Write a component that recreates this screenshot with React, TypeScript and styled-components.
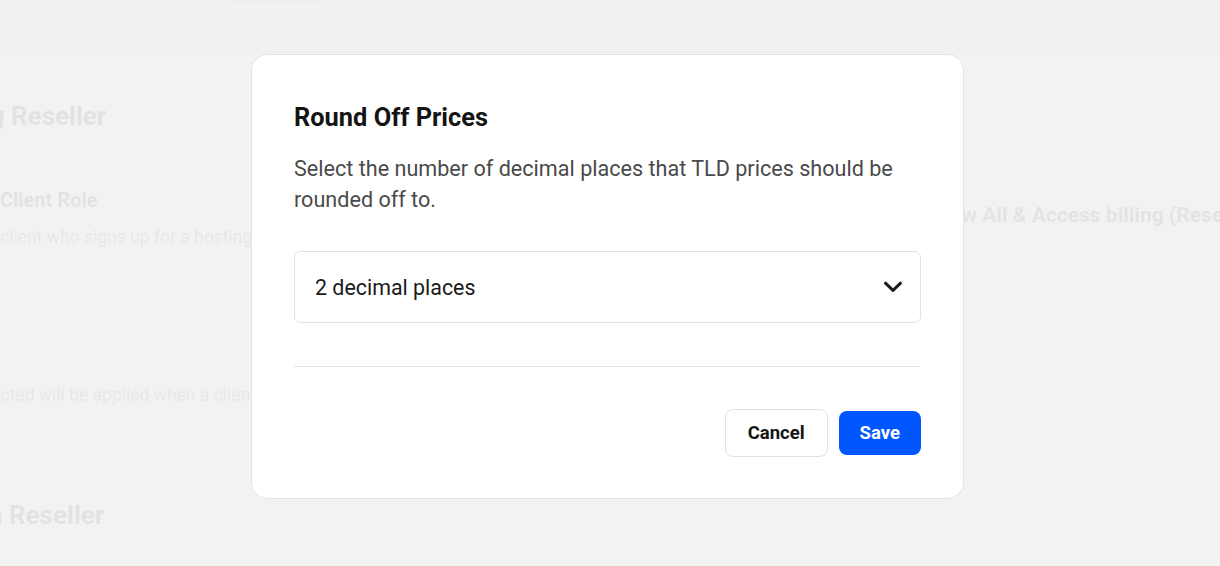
import * as React from 'react';
import styled, { createGlobalStyle } from 'styled-components';

const GlobalStyle = createGlobalStyle`
  html, body {
    margin: 0;
    padding: 0;
    background: #ffffff;
    font-family: Roboto, 'Liberation Sans', sans-serif;
    overflow: hidden;
  }
  * {
    box-sizing: border-box;
  }
`;

function ChevronDown() {
  return (
    <svg width="20" height="12" viewBox="0 0 20 12" fill="none">
      <path
        d="M2.5 2.2 L10 9.4 L17.5 2.2"
        stroke="#1c1c1c"
        strokeWidth="3"
        strokeLinecap="round"
        strokeLinejoin="round"
      />
    </svg>
  );
}

function RoundOffModal() {
  return (
    <Backdrop>
      <Dialog role="dialog" aria-labelledby="round-off-title">
        <Title id="round-off-title">Round Off Prices</Title>
        <Description>
          Select the number of decimal places that TLD prices should be rounded off to.
        </Description>

        <SelectBox>
          <SelectValue>2 decimal places</SelectValue>
          <ChevronDown />
        </SelectBox>

        <Divider />

        <Actions>
          <Button variant="secondary">Cancel</Button>
          <Button variant="primary">Save</Button>
        </Actions>
      </Dialog>
    </Backdrop>
  );
}

function App() {
  return (
    <>
      <GlobalStyle />
      <Page>
        <TopBar>
          <TabUnderline />
        </TopBar>
        <Content>
          <SectionTitle>Hosting Reseller</SectionTitle>
          <SettingRow>
            <SettingInfo>
              <SettingName>Default Client Role</SettingName>
              <SettingHint>Any new client who signs up for a hosting plan</SettingHint>
            </SettingInfo>
            <SettingValue>View All &amp; Access billing (Reseller)</SettingValue>
          </SettingRow>
          <SettingRow spaced>
            <SettingInfo>
              <SettingHint>Role selected will be applied when a client is created</SettingHint>
            </SettingInfo>
          </SettingRow>
          <SectionTitle>Domain Reseller</SectionTitle>
        </Content>
      </Page>
      <RoundOffModal />
    </>
  );
}

const Page = styled.div`
  min-height: 100vh;
  background: #ffffff;
`;

const TopBar = styled.header`
  height: 53px;
  background: #e4e4e4;
  border-bottom: 1px solid #d6d6d6;
  padding-left: 232px;
`;

const TabUnderline = styled.div`
  width: 90px;
  height: 2px;
  background: #c4c4c4;
`;

const Content = styled.main`
  margin-left: -87px;
`;

const SectionTitle = styled.h2`
  margin: 0;
  padding: 47px 0 0;
  height: 126px;
  font-size: 26px;
  line-height: 32px;
  font-weight: 700;
  color: #1a1a1a;
  white-space: nowrap;
`;

const SettingRow = styled.section<{ spaced?: boolean }>`
  display: grid;
  grid-template-columns: 1018px 1fr;
  align-items: start;
  height: ${({ spaced }) => (spaced ? '159px' : '114px')};
  padding-top: ${({ spaced }) => (spaced ? '90px' : '9px')};
  border-bottom: 1px solid #d9d9d9;
`;

const SettingInfo = styled.div`
  display: flex;
  flex-direction: column;
  gap: 13px;
  padding-left: 17px;
`;

const SettingName = styled.h3`
  margin: 0;
  font-size: 20px;
  line-height: 24px;
  font-weight: 700;
  color: #1a1a1a;
  white-space: nowrap;
`;

const SettingHint = styled.p`
  margin: 0;
  font-size: 17.5px;
  line-height: 24px;
  color: #5a5a5a;
  white-space: nowrap;
`;

const SettingValue = styled.div`
  padding-top: 15px;
  font-size: 21px;
  line-height: 24px;
  font-weight: 700;
  color: #2a2a2a;
  white-space: nowrap;
`;

const Backdrop = styled.div`
  position: fixed;
  inset: 0;
  background: rgba(241, 241, 241, 0.935);
  display: flex;
  justify-content: center;
  align-items: flex-start;
  padding-top: 54px;
  padding-right: 5px;
`;

const Dialog = styled.div`
  width: 713px;
  background: #ffffff;
  border: 1px solid #e3e3e3;
  border-radius: 16px;
  padding: 42px 42px 41px;
  display: flex;
  flex-direction: column;
`;

const Title = styled.h1`
  margin: 0 0 16px;
  font-size: 25.4px;
  line-height: 40px;
  font-weight: 700;
  color: #141414;
`;

const Description = styled.p`
  margin: 0 0 36px;
  font-size: 21.6px;
  line-height: 31px;
  color: #4a4a4a;
  max-width: 620px;
`;

const SelectBox = styled.div`
  height: 72px;
  border: 1px solid #e2e2e2;
  border-radius: 6px;
  padding: 0 17px 0 20px;
  display: flex;
  align-items: center;
  justify-content: space-between;
  cursor: pointer;
`;

const SelectValue = styled.span`
  font-size: 21.4px;
  color: #1a1a1a;
`;

const Divider = styled.hr`
  margin: 43px 0 42px;
  border: none;
  border-top: 1px solid #e4e4e4;
`;

const Actions = styled.div`
  display: flex;
  justify-content: flex-end;
  align-items: center;
  gap: 11px;
`;

const Button = styled.button<{ variant: 'primary' | 'secondary' }>`
  font-family: inherit;
  font-size: 18.5px;
  font-weight: 700;
  border-radius: 8px;
  cursor: pointer;
  height: ${({ variant }) => (variant === 'primary' ? '44px' : '48px')};
  padding: 0 ${({ variant }) => (variant === 'primary' ? '21px' : '22px')};
  background: ${({ variant }) => (variant === 'primary' ? '#0057ff' : '#ffffff')};
  color: ${({ variant }) => (variant === 'primary' ? '#ffffff' : '#141414')};
  border: ${({ variant }) => (variant === 'primary' ? 'none' : '1px solid #e2e2e2')};
`;

export default App;
